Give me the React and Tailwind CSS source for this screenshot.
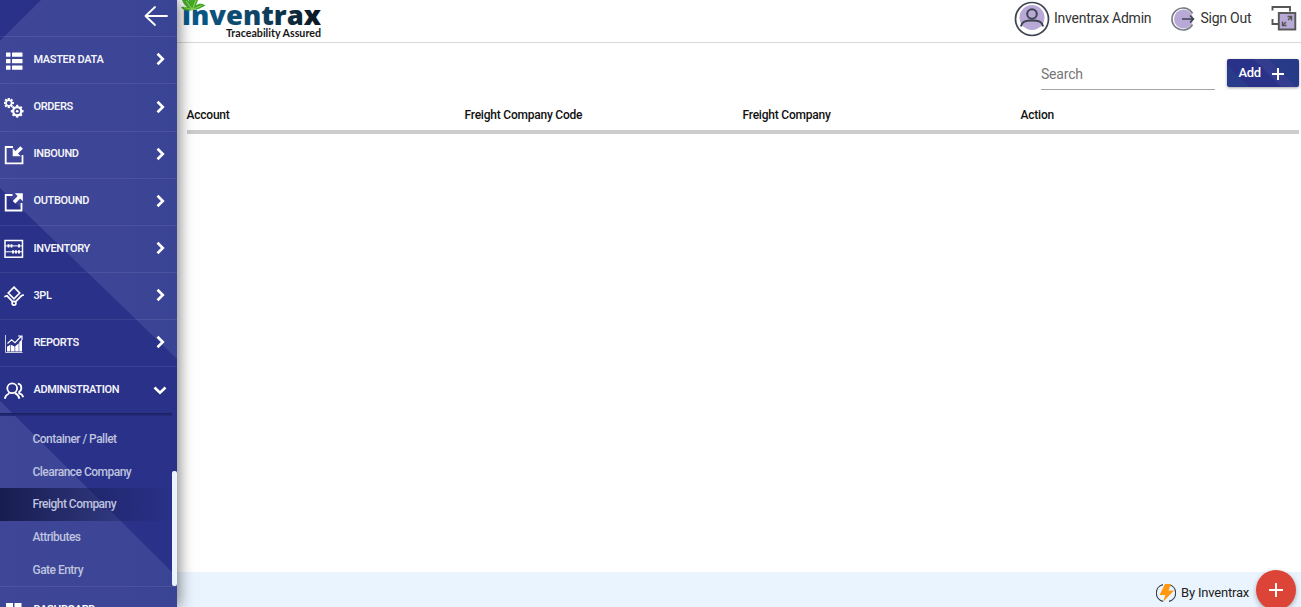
import React from "react";

const ico = { fill: "none", stroke: "#fff", strokeWidth: 1.5 };

const MasterIcon = () => (
  <svg width="20" height="20" viewBox="0 0 20 20" fill="#fff">
    {[1.5, 8, 14.5].map((y) => (
      <g key={y}>
        <rect x="2" y={y} width="4.5" height="4.2" rx=".5" />
        <rect x="8" y={y} width="10.5" height="4.2" rx=".5" />
      </g>
    ))}
  </svg>
);

const Gear = ({ cx, cy, r, teeth, w }) => (
  <g transform={`translate(${cx} ${cy})`}>
    <circle r={r} fill="none" stroke="#fff" strokeWidth={w} />
    {Array.from({ length: teeth }, (_, i) => (
      <rect key={i} x="-1.1" y={-r - 2.3} width="2.2" height="2" fill="#fff" transform={`rotate(${(i * 360) / teeth})`} />
    ))}
  </g>
);

const OrdersIcon = () => (
  <svg width="20" height="20" viewBox="0 0 20 20">
    <Gear cx={4.8} cy={5} r={2.8} teeth={8} w={1.7} />
    <Gear cx={13.2} cy={13.2} r={4.1} teeth={8} w={2.3} />
    <circle cx="13.2" cy="13.2" r="1.3" fill="#fff" />
  </svg>
);

const InboundIcon = () => (
  <svg width="20" height="20" viewBox="0 0 20 20" {...ico}>
    <path d="M9 2H1.700v16.300h16.800V10" strokeWidth="1.800" />
    <path d="M17.600 2.400L12 8" strokeWidth="3.600" />
    <path d="M8.700 3.300v8h8z" fill="#fff" stroke="none" />
  </svg>
);

const OutboundIcon = () => (
  <svg width="20" height="20" viewBox="0 0 20 20" {...ico}>
    <path d="M8.500 3H1.700v15.500h15.800V11" strokeWidth="1.800" />
    <path d="M10 10.200L15.500 4.700" strokeWidth="3.600" />
    <path d="M10.800 1.200h8v8z" fill="#fff" stroke="none" />
  </svg>
);

const InventoryIcon = () => (
  <svg width="20" height="20" viewBox="0 0 20 20" {...ico}>
    <rect x="1" y="1.500" width="17.500" height="16.700" />
    <path d="M1 6.900h17.500M1 12.800h17.500" strokeWidth="1" />
    <path d="M4.500 5.300v3.200M7.500 5.300v3.200M15 5.300v3.200M9 11.200v3.200M12 11.200v3.200M15 11.200v3.200" strokeWidth="1.900" />
  </svg>
);

const PlIcon = () => (
  <svg width="20" height="20" viewBox="0 0 20 20" {...ico} strokeWidth="1.7">
    <path d="M10 1.200l5.700 5.800L10 12.800 4.300 7z" />
    <path d="M.3 10.800L3 9.800l5.600 5.800M19.800 8.800l-2.400 1-5.700 5.800" />
    <circle cx="10" cy="17.200" r="1.900" />
  </svg>
);

const ReportsIcon = () => (
  <svg width="20" height="20" viewBox="0 0 20 20" {...ico}>
    <path d="M1.500 1v17.500h17" strokeWidth="1" strokeOpacity=".75" />
    <path d="M3 17.500v-4.800l3.400-2v6.800zM7 17.500v-6.800l3.600 1.800v5zM11.200 17.500v-5.300l3.500-3v8.300zM15.200 17.500V8l2.800-2.500v12z" fill="#fff" stroke="none" />
    <path d="M3.500 9.500l4-3.600 3.500 2.800 6-6.200M14 2h4v4" strokeWidth="1.200" />
  </svg>
);

const AdminIcon = () => (
  <svg width="20" height="20" viewBox="0 0 20 20" {...ico} strokeWidth="1.8">
    <circle cx="8.200" cy="7.300" r="4.900" />
    <path d="M.7 17.700c.6-2.600 2.200-4.400 4.600-5.500M11 12.200c2.300 1 3.800 2.900 4.400 5.500M13.800 2.700c4.200.5 4.600 6.300 1.400 8.100v1.500c2.200.5 3.500 1.900 4 3.900" />
  </svg>
);

const items = [
  ["MASTER DATA", MasterIcon],
  ["ORDERS", OrdersIcon],
  ["INBOUND", InboundIcon],
  ["OUTBOUND", OutboundIcon],
  ["INVENTORY", InventoryIcon],
  ["3PL", PlIcon],
  ["REPORTS", ReportsIcon],
  ["ADMINISTRATION", AdminIcon],
];

const subItems = ["Container / Pallet", "Clearance Company", "Freight Company", "Attributes", "Gate Entry"];

function Sidebar() {
  return (
    <aside className="relative z-10 h-[607px] w-[177px] shrink-0 overflow-hidden bg-[#293189] shadow-[2px_0_14px_rgba(0,0,0,0.5)]">
      <svg className="absolute inset-0" width="177" height="607">
        <defs>
          <linearGradient id="facet">
            <stop offset="0" stopColor="#3f4697" />
            <stop offset="1" stopColor="#3a4495" />
          </linearGradient>
        </defs>
        <path d="M41 0H177V359L0 188V41z" fill="url(#facet)" />
        <path d="M0 401L177 577V607H0z" fill="url(#facet)" />
      </svg>
      <div className="relative">
        <div className="flex h-[37.4px] items-start justify-end border-b border-white/8 pt-[5px] pr-[9px]">
          <svg width="24" height="22" viewBox="0 0 24 22" fill="none" stroke="#fff" strokeWidth="1.800" strokeLinecap="round" strokeLinejoin="round">
            <path d="M11 2L1.500 11l9.500 9M1.500 11H23" />
          </svg>
        </div>
        {items.map(([name, Icon], i) => (
          <div key={name} className={`flex h-[47.1px] items-center pl-1 ${i < 7 ? "border-b border-white/8" : ""}`}>
            <span className="mt-[1px]"><Icon /></span>
            <span className="ml-[9.4px] grow text-[11px] font-semibold tracking-[-0.34px] whitespace-nowrap text-white/95">{name}</span>
            <svg className="mt-[-2px] mr-[10.5px]" width="14" height="14" viewBox="0 0 14 14" fill="none" stroke="#fff" strokeWidth="2.600">
              <path d={i === 7 ? "M1.500 4.500L7 9.800l5.500-5.300" : "M4.500 1.800L9.800 7l-5.300 5.200"} />
            </svg>
          </div>
        ))}
        <div className="mt-[-1.2px] h-[174px] border-b border-white/8">
          <div className="h-[3px] w-[172px] bg-linear-to-b from-[#191f5c] to-[#262e80]" />
          <div className="pt-[6.6px]">
            {subItems.map((name, i) => (
              <div key={name} className={`flex h-[32.7px] w-[172px] items-center pl-[32.5px] text-[12px] font-medium tracking-[-0.52px] text-[#bfc3df] ${i === 2 ? "bg-linear-to-r from-[#171c4f] to-transparent" : ""}`}>
                {name}
              </div>
            ))}
          </div>
        </div>
        <div className="flex h-[47px] items-center pl-1">
          <svg width="20" height="20" viewBox="0 0 20 20" fill="#fff"><path d="M2 3h7v7H2zM10.500 3h7v7h-7zM2 12h7v6H2zM10.500 12h7v6h-7z" /></svg>
          <span className="ml-[9.4px] text-[11px] font-semibold tracking-[-0.34px] text-white">DASHBOARD</span>
        </div>
      </div>
      <div className="absolute top-[471px] right-0 h-[115px] w-[5px] rounded-[2px] bg-[#eaf4fe]" />
    </aside>
  );
}

function Logo() {
  return (
    <svg width="145" height="42" viewBox="0 0 145 42" className="shrink-0">
      <defs>
        <linearGradient id="word" gradientUnits="userSpaceOnUse" x1="2" y1="0" x2="142" y2="0">
          <stop offset="0" stopColor="#075b8c" />
          <stop offset=".5" stopColor="#104668" />
          <stop offset="1" stopColor="#0b151d" />
        </linearGradient>
      </defs>
      <text x="1" y="25" textLength="139" lengthAdjust="spacingAndGlyphs" fontFamily="Open Sans" fontWeight="800" fontSize="26" fill="url(#word)">ınventrax</text>
      <path d="M1 0h6c3 2 4 5 4.500 9C7 8.500 3 6 1 0zM8 0h9c-1 4-3 7-5.500 9C9 7 8 4 8 0zM11.500 10c2-6 8-8 13-4.500-3 1-6 4.500-13 4.500zM11.500 10C8 11.500 2 11 0 7c4-1 8 0 11.500 3z" fill="#43a82b" />
      <path d="M11.500 9.500L5 1M11.500 9.500L15 0M11.500 9.500l9-4M11.500 9.500L3 7.500" stroke="#8bcf55" strokeWidth="1.100" />
      <text x="45" y="37" textLength="95" lengthAdjust="spacingAndGlyphs" fontFamily="Lato" fontWeight="700" fontSize="10.500" fill="#171717">Traceability Assured</text>
    </svg>
  );
}

export default function App() {
  return (
    <div className="flex h-[607px] w-[1301px] overflow-hidden bg-white font-['Roboto',sans-serif]">
      <Sidebar />
      <main className="flex min-w-0 grow flex-col">
        <header className="flex h-[43px] shrink-0 items-start border-b border-[#d8d8d8] pl-1">
          <Logo />
          <div className="ml-auto flex h-[38px] items-center text-[14px] text-[#333]">
            <svg width="36" height="36" viewBox="0 0 36 36" fill="none" stroke="#3e4350" strokeWidth="1.700">
              <circle cx="18" cy="18" r="16.500" />
              <circle cx="18" cy="16.500" r="12.500" fill="#b9a9d6" stroke="none" />
              <circle cx="18" cy="13" r="4.800" strokeWidth="2" />
              <path d="M7 25.500c.8-4.800 4.200-6 11-6s10.200 1.200 11 6" strokeWidth="2" />
            </svg>
            <span className="mt-[-2px] ml-1 w-[97px] tracking-[-0.24px] whitespace-nowrap">Inventrax Admin</span>
            <svg className="ml-5" width="24" height="24" viewBox="0 0 24 24" fill="none" stroke="#777e84" strokeWidth="1.700">
              <circle cx="12.500" cy="12" r="9.500" fill="#b9a9d6" stroke="none" />
              <path d="M21.500 6.500A11 11 0 1 0 21.500 17.500" />
              <path d="M11 12h11.500M19 8.500l3.500 3.500-3.500 3.500" stroke="#3e4350" strokeWidth="1.600" />
            </svg>
            <span className="mt-[-2px] ml-[5.500px] w-[51px] tracking-[-0.24px] whitespace-nowrap">Sign Out</span>
            <svg className="mt-[-3px] mr-[4.500px] ml-[18px]" width="27" height="26" viewBox="0 0 27 26" fill="none" stroke="#555" strokeWidth="1.900">
              <path d="M20 6.500V2H2.500V5.500M2.500 14v5H8" />
              <rect x="8.800" y="8" width="16.500" height="16.500" fill="#b9a9d6" />
              <path d="M18 15l3.500-3.500M17.500 11.500h4v4M16 17l-3.500 3.500M12.500 16.500v4h4" strokeWidth="1.400" />
            </svg>
          </div>
        </header>
        <section className="grow pr-[2.5px] pl-[9.5px]">
          <div className="flex justify-end gap-3 pt-4">
            <input placeholder="Search" className="h-[31px] w-[173.5px] border-b border-[#a5a5a5] text-[14px] tracking-[-0.2px] outline-none placeholder:text-[#777]" />
            <button className="flex h-7 w-[72px] items-center gap-[10px] rounded-[2px] bg-[linear-gradient(45deg,#293b8b_0_22%,#293189_22%_55%,#343c90_55%_70%,#263a88_70%)] pl-3 text-[13px] font-medium tracking-[-0.4px] text-white shadow-[0_1px_3px_rgba(0,0,0,0.35)]">
              <span className="mt-[-1px]">Add</span>
              <svg className="mt-px" width="14" height="14" viewBox="0 0 14 14" stroke="#fff" strokeWidth="2"><path d="M7 1v12M1 7h12" /></svg>
            </button>
          </div>
          <div className="mt-[1px] grid h-[43px] grid-cols-4 border-b-4 border-[#cccccc] pt-[15px] text-[12px] leading-[18px] font-medium tracking-[-0.22px] text-[#111]">
            <span>Account</span>
            <span>Freight Company Code</span>
            <span>Freight Company</span>
            <span>Action</span>
          </div>
        </section>
        <footer className="relative flex h-[35px] shrink-0 items-center justify-end bg-[#eaf4fe] pt-[7px] pr-[52px] text-[13px] text-[#222]">
          <svg width="20" height="20" viewBox="0 0 20 20" fill="none">
            <path d="M7 1.700A8.500 8.500 0 0 0 7 18.300M13 1.700A8.500 8.500 0 0 1 13 18.300" stroke="#37404a" strokeWidth="1.200" />
            <path d="M9 1h6l-2.500 6.500H18L7 19l2.300-7H3.500z" fill="#ff9811" />
          </svg>
          <span className="ml-[5px] w-[68px] tracking-[-0.2px] whitespace-nowrap">By Inventrax</span>
          <button className="absolute top-[-2px] right-[5px] flex size-[40px] items-center justify-center rounded-full bg-[#db4437] shadow-[0_2px_5px_rgba(0,0,0,0.3)]">
            <svg width="14" height="14" viewBox="0 0 14 14" stroke="#fff" strokeWidth="1.900"><path d="M7 0v14M0 7h14" /></svg>
          </button>
        </footer>
      </main>
    </div>
  );
}
